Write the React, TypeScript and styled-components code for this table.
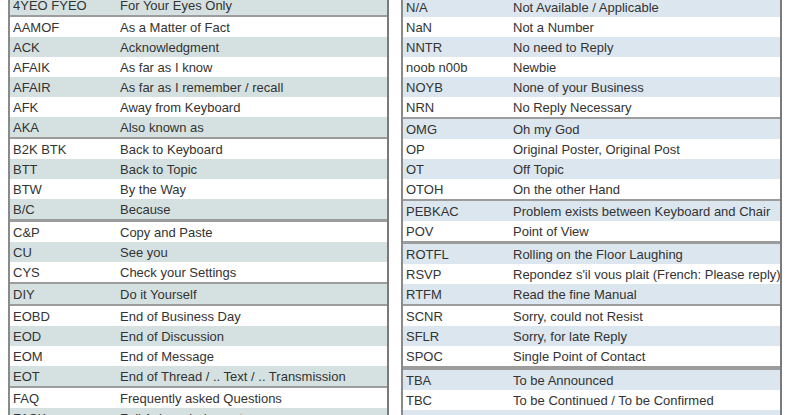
import React from "react";
import styled, { createGlobalStyle } from "styled-components";

const Global = createGlobalStyle`
  html, body { margin: 0; padding: 0; background: #ffffff; overflow: hidden; }
  body { font-family: "Liberation Sans", Arial, sans-serif; }
  *, *::before, *::after { box-sizing: border-box; }
`;

type Entry = [string, string];
type Group = Entry[];

const leftGroups: Group[] = [
  [["4YEO FYEO", "For Your Eyes Only"]],
  [
    ["AAMOF", "As a Matter of Fact"],
    ["ACK", "Acknowledgment"],
    ["AFAIK", "As far as I know"],
    ["AFAIR", "As far as I remember / recall"],
    ["AFK", "Away from Keyboard"],
    ["AKA", "Also known as"],
  ],
  [
    ["B2K BTK", "Back to Keyboard"],
    ["BTT", "Back to Topic"],
    ["BTW", "By the Way"],
    ["B/C", "Because"],
  ],
  [
    ["C&P", "Copy and Paste"],
    ["CU", "See you"],
    ["CYS", "Check your Settings"],
  ],
  [["DIY", "Do it Yourself"]],
  [
    ["EOBD", "End of Business Day"],
    ["EOD", "End of Discussion"],
    ["EOM", "End of Message"],
    ["EOT", "End of Thread / .. Text / .. Transmission"],
  ],
  [
    ["FAQ", "Frequently asked Questions"],
    ["FASK", "Full Acknowledgment"],
  ],
];

const rightGroups: Group[] = [
  [
    ["N/A", "Not Available / Applicable"],
    ["NaN", "Not a Number"],
    ["NNTR", "No need to Reply"],
    ["noob n00b", "Newbie"],
    ["NOYB", "None of your Business"],
    ["NRN", "No Reply Necessary"],
  ],
  [
    ["OMG", "Oh my God"],
    ["OP", "Original Poster, Original Post"],
    ["OT", "Off Topic"],
    ["OTOH", "On the other Hand"],
  ],
  [
    ["PEBKAC", "Problem exists between Keyboard and Chair"],
    ["POV", "Point of View"],
  ],
  [
    ["ROTFL", "Rolling on the Floor Laughing"],
    ["RSVP", "Repondez s'il vous plait (French: Please reply)"],
    ["RTFM", "Read the fine Manual"],
  ],
  [
    ["SCNR", "Sorry, could not Resist"],
    ["SFLR", "Sorry, for late Reply"],
    ["SPOC", "Single Point of Contact"],
  ],
  [
    ["TBA", "To be Announced"],
    ["TBC", "To be Continued / To be Confirmed"],
    ["TBD", "To be Defined"],
  ],
];

const Page = styled.div`
  display: flex;
  gap: 12px;
  padding: 0 8px;
  margin-top: -5px;
`;

const Table = styled.div`
  flex: 0 0 381px;
  width: 381px;
  display: flex;
  flex-direction: column;
  border-left: 2px solid #8a8a8a;
  border-right: 2px solid #7a7a7a;
`;

const GroupBox = styled.div<{ $sep: number }>`
  display: flex;
  flex-direction: column;
  border-top: ${(p) => p.$sep}px solid #9c9c9c;
`;

const Row = styled.div<{ $alt: boolean; $tint: string }>`
  display: grid;
  grid-template-columns: 107px 1fr;
  height: 20px;
  line-height: 21px;
  padding-left: 3px;
  background: ${(p) => (p.$alt ? p.$tint : "#ffffff")};
  color: #333333;
  font-size: 13px;
  white-space: nowrap;
  overflow: hidden;
`;

const Cell = styled.span`
  overflow: hidden;
`;

function AbbrTable({
  groups,
  tint,
  seps,
}: {
  groups: Group[];
  tint: string;
  seps: number[];
}) {
  let idx = 0;
  return (
    <Table>
      {groups.map((g, gi) => (
        <GroupBox key={gi} $sep={seps[gi]}>
          {g.map(([a, d]) => {
            const alt = idx % 2 === 0;
            idx++;
            return (
              <Row key={a} $alt={alt} $tint={tint}>
                <Cell>{a}</Cell>
                <Cell>{d}</Cell>
              </Row>
            );
          })}
        </GroupBox>
      ))}
    </Table>
  );
}

export default function App() {
  return (
    <>
      <Global />
      <Page>
        <AbbrTable
          groups={leftGroups}
          tint="#d5e1e1"
          seps={[0, 2, 2, 3, 2, 2, 2]}
        />
        <AbbrTable
          groups={rightGroups}
          tint="#dce6ee"
          seps={[2, 2, 2, 3, 2, 4]}
        />
      </Page>
    </>
  );
}
